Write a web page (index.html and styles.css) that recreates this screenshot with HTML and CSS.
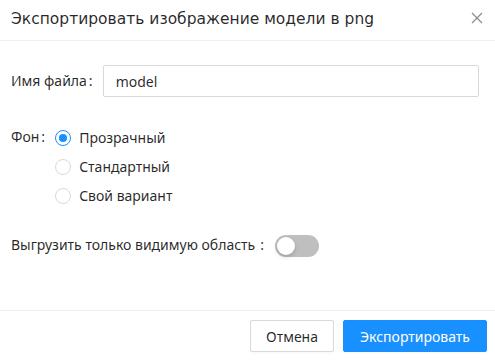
FILE: index.html
```html
<!DOCTYPE html>
<html lang="ru">
<head>
    <meta charset="UTF-8">
    <meta name="viewport" content="width=device-width, initial-scale=1.0">
    <title>Экспорт в png</title>
    <link rel="stylesheet" href="styles.css">
</head>
<body>
    <div class="modal">
        <div class="modal-header">
            <div class="modal-title">Экспортировать изображение модели в png</div>
            <button class="modal-close" aria-label="Закрыть">
                <svg width="12" height="12" viewBox="0 0 12 12"><path d="M1 1L11 11M11 1L1 11" stroke="#8c8c8c" stroke-width="1.2" fill="none"/></svg>
            </button>
        </div>
        <div class="modal-body">
            <div class="form-item">
                <label class="form-label">Имя файла<span class="colon">:</span></label>
                <input class="text-input" type="text" value="model">
            </div>
            <div class="form-item form-item-radio">
                <label class="form-label">Фон<span class="colon">:</span></label>
                <div class="radio-group">
                    <label class="radio checked"><span class="radio-dot"></span>Прозрачный</label>
                    <label class="radio"><span class="radio-dot"></span>Стандартный</label>
                    <label class="radio"><span class="radio-dot"></span>Свой вариант</label>
                </div>
            </div>
            <div class="form-item form-item-switch">
                <label class="form-label">Выгрузить только видимую область<span class="colon">:</span></label>
                <span class="switch"><span class="switch-knob"></span></span>
            </div>
        </div>
        <div class="modal-footer">
            <button class="btn">Отмена</button>
            <button class="btn btn-primary">Экспортировать</button>
        </div>
    </div>
</body>
</html>
```

FILE: styles.css
```css
body { margin: 0; background: #fff; font-family: "Noto Sans", sans-serif; font-size: 14px; color: rgba(0, 0, 0, 0.85); }
.modal { width: 495px; height: 362px; display: flex; flex-direction: column; background: #fff; }
.modal-header { height: 40px; padding: 0 12px 0 11px; display: flex; align-items: center; justify-content: space-between; border-bottom: 1px solid #f0f0f0; }
.modal-title { font-family: "DejaVu Sans", sans-serif; font-size: 15.5px; color: rgba(0, 0, 0, 0.85); margin-top: -2px; }
.modal-close { border: none; background: none; padding: 0; width: 12px; height: 12px; display: flex; margin-top: -4px; cursor: pointer; }
.modal-body { flex: 1; padding: 24px 16px 0 11px; }
.form-item { display: flex; align-items: flex-start; margin-bottom: 24px; }
.form-label { height: 32px; line-height: 32px; white-space: nowrap; }
.colon { margin: 0 10px 0 2px; }
.text-input { flex: 1; height: 32px; box-sizing: border-box; border: 1px solid #d9d9d9; border-radius: 2px; padding: 4px 12px; font-family: "Noto Sans", sans-serif; font-size: 14px; color: rgba(0, 0, 0, 0.85); outline: none; }
.form-item-radio { margin-bottom: 19px; }
.radio-group { display: flex; flex-direction: column; padding-top: 2px; }
.radio { height: 29px; display: flex; align-items: center; gap: 8px; }
.radio-dot { width: 16px; height: 16px; box-sizing: border-box; border: 1px solid #d9d9d9; border-radius: 50%; position: relative; }
.radio.checked .radio-dot { border-color: #1890ff; }
.radio.checked .radio-dot::after { content: ""; position: absolute; left: 3px; top: 3px; width: 8px; height: 8px; border-radius: 50%; background: #1890ff; }
.form-item-switch { align-items: center; }
.form-item-switch .colon { margin: 0 11px 0 5px; }
.switch { width: 44px; height: 22px; margin-top: 1px; border-radius: 11px; background: #bfbfbf; position: relative; }
.switch-knob { position: absolute; left: 2px; top: 2px; width: 18px; height: 18px; border-radius: 50%; background: #fff; box-shadow: 0 2px 4px rgba(0, 35, 11, 0.2); }
.modal-footer { border-top: 1px solid #f0f0f0; padding: 9px 8px 10px; display: flex; justify-content: flex-end; gap: 9px; }
.btn { height: 32px; padding: 4px 15px; font-family: "Noto Sans", sans-serif; font-size: 14px; border: 1px solid #d9d9d9; border-radius: 2px; background: #fff; color: rgba(0, 0, 0, 0.85); cursor: pointer; box-shadow: 0 2px 0 rgba(0, 0, 0, 0.015); }
.btn-primary { background: #1890ff; border-color: #1890ff; color: #fff; padding: 4px 16px; }
```
